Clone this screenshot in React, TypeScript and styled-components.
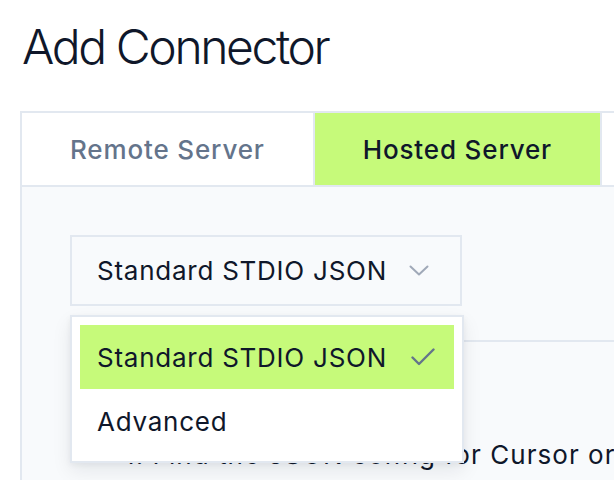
import styled, { createGlobalStyle } from "styled-components";

const GlobalStyle = createGlobalStyle`
  html, body {
    margin: 0;
    padding: 0;
    background: #ffffff;
    overflow: hidden;
  }
  body {
    font-family: Inter, "Noto Sans", "Liberation Sans", sans-serif;
    color: #0f172a;
  }
`;

const options = ["Standard STDIO JSON", "Advanced"];

const App = () => {
  const selected = options[0];

  return (
    <>
      <GlobalStyle />
      <Page>
        <Title>Add Connector</Title>
        <Frame>
          <TabRow>
            <Tab>Remote Server</Tab>
            <Tab $active>Hosted Server</Tab>
          </TabRow>
          <Panel>
            <SelectWrap>
              <Trigger>
                <span>{selected}</span>
                <svg width="20" height="11" viewBox="0 0 20 11" fill="none">
                  <polyline points="1.5,1.5 10,9.5 18.5,1.5" stroke="#a0a9b8" strokeWidth="2" strokeLinecap="round" strokeLinejoin="round" />
                </svg>
              </Trigger>
              <Menu>
                {options.map((option) => (
                  <MenuItem key={option} $selected={option === selected}>
                    <span>{option}</span>
                    {option === selected && (
                      <svg width="24" height="18" viewBox="0 0 24 18" fill="none">
                        <polyline points="1.5,9.5 8,16 22.5,1.5" stroke="#64748b" strokeWidth="2.4" strokeLinecap="round" strokeLinejoin="round" />
                      </svg>
                    )}
                  </MenuItem>
                ))}
              </Menu>
            </SelectWrap>
            <Steps>
              <Step>1. Find the JSON config for Cursor or Claude Desktop</Step>
            </Steps>
          </Panel>
        </Frame>
      </Page>
    </>
  );
};

const Page = styled.div`
  width: 900px;
  height: 480px;
  overflow: hidden;
`;

const Title = styled.h1`
  margin: 0;
  padding: 18px 22px 0;
  font-size: 48px;
  font-weight: 300;
  line-height: 58px;
  letter-spacing: -2.4px;
  color: #0f172a;
`;

const Frame = styled.div`
  margin: 35px 0 0 20px;
  border: 2px solid #e2e8f0;
  border-right: none;
`;

const TabRow = styled.div`
  display: flex;
  background: #ffffff;
  border-bottom: 2px solid #e2e8f0;
`;

const Tab = styled.div<{ $active?: boolean }>`
  display: flex;
  align-items: center;
  height: 72px;
  padding: 0 48px;
  font-size: 26px;
  font-weight: 500;
  letter-spacing: 0.85px;
  white-space: nowrap;
  border-right: 2px solid #e2e8f0;
  background: ${(p) => (p.$active ? "#c6fa7a" : "#ffffff")};
  color: ${(p) => (p.$active ? "#0f172a" : "#64748b")};
`;

const Panel = styled.div`
  background: #f8fafc;
  padding: 48px 0 40px 48px;
  min-height: 400px;
`;

const SelectWrap = styled.div`
  position: relative;
  display: inline-block;
`;

const Trigger = styled.div`
  display: flex;
  align-items: center;
  gap: 22px;
  height: 67px;
  padding: 0 31px 0 25px;
  border: 2px solid #e2e8f0;
  background: #f8fafc;
  font-size: 26px;
  letter-spacing: 0.75px;
  color: #0f172a;
  white-space: nowrap;
`;

const Menu = styled.div`
  position: absolute;
  top: 80px;
  left: 0;
  width: 374px;
  padding: 8px;
  background: #ffffff;
  border: 2px solid #e2e8f0;
  box-shadow: 0 8px 18px rgba(15, 23, 42, 0.08), 0 2px 6px rgba(15, 23, 42, 0.05);
  z-index: 2;
`;

const MenuItem = styled.div<{ $selected?: boolean }>`
  display: flex;
  align-items: center;
  justify-content: space-between;
  height: 64px;
  padding: 0 19px 0 17px;
  font-size: 26px;
  letter-spacing: 0.75px;
  color: #0f172a;
  white-space: nowrap;
  background: ${(p) => (p.$selected ? "#c6fa7a" : "transparent")};
`;

const Steps = styled.div`
  margin-top: 34px;
  border-top: 2px solid #e2e8f0;
  padding: 93px 0 0 54px;
`;

const Step = styled.p`
  margin: 0;
  font-size: 26px;
  line-height: 39px;
  letter-spacing: 1.05px;
  color: #0f172a;
  white-space: nowrap;
`;

export default App;
